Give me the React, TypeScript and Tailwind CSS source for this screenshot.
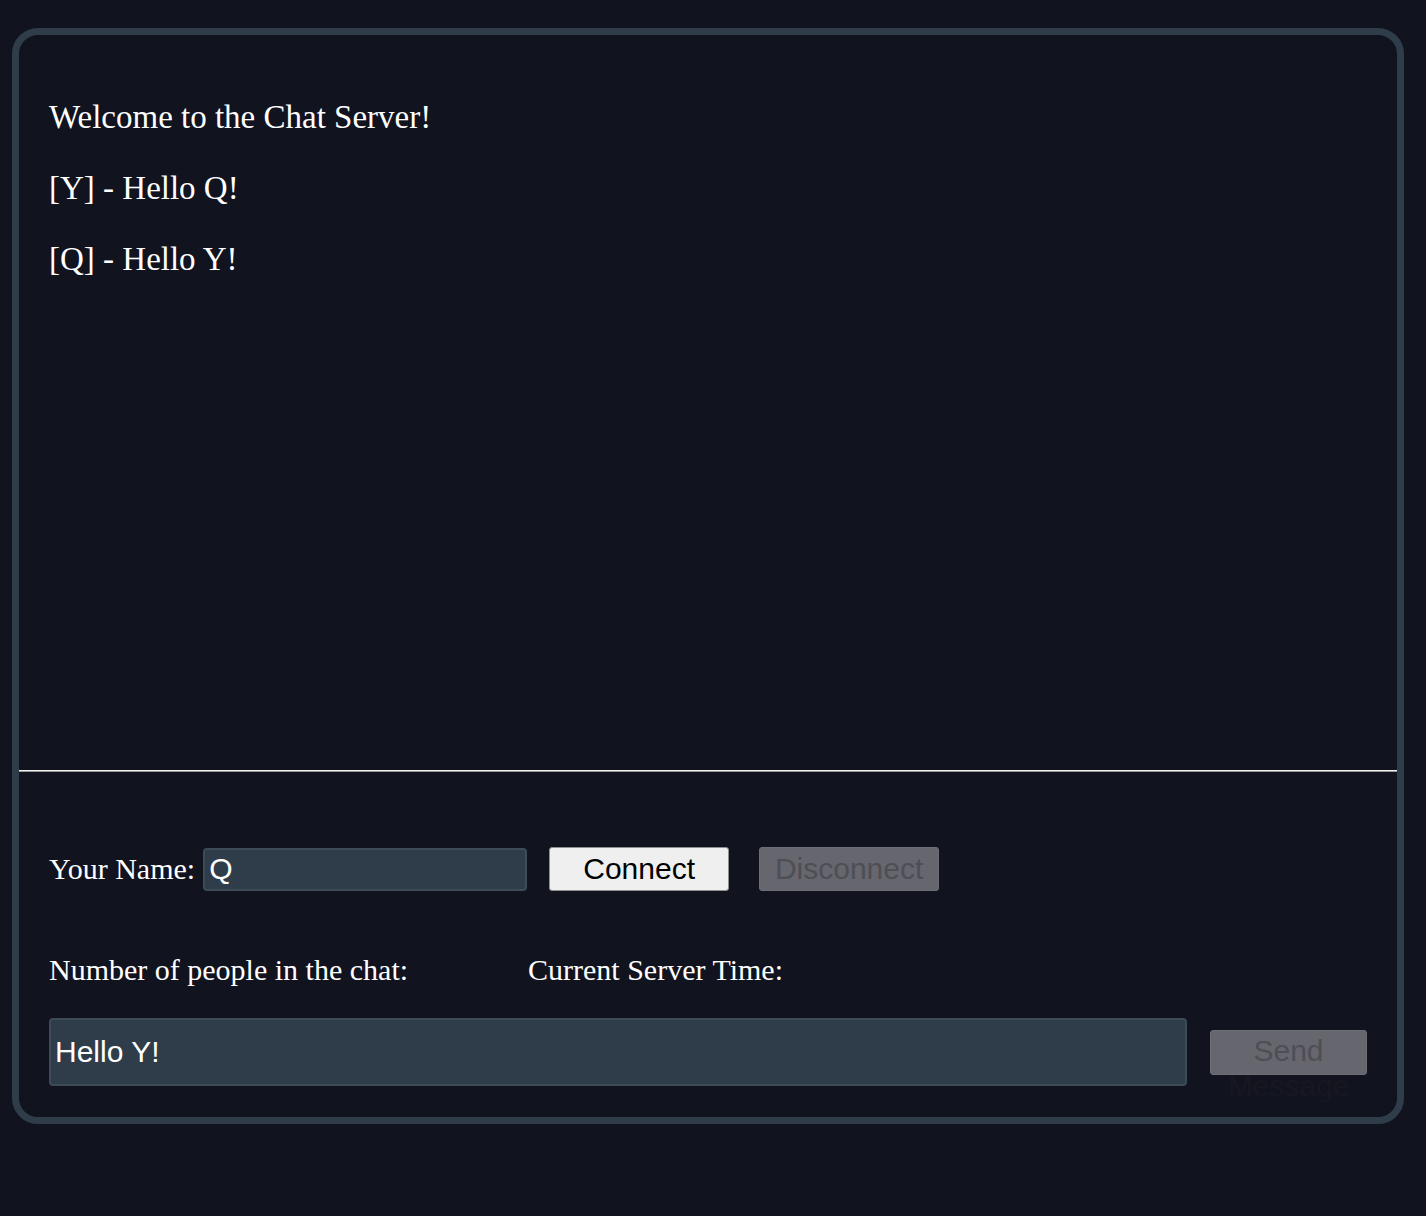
export default function App() {
  return (
    <div className="min-h-[1216px] bg-[#11131f] pt-[28px] pl-[12px] font-['Liberation_Serif',serif] text-white">
      <div className="w-[1392px] h-[1096px] rounded-[26px] border-[7px] border-[#2f3d4a] bg-[#11131f] flex flex-col overflow-hidden">
        {/* Message log */}
        <div className="h-[735px] px-[30px] pt-[63px] flex flex-col gap-[33px] text-[33px] leading-[38px]">
          <p>Welcome to the Chat Server!</p>
          <p>[Y] - Hello Q!</p>
          <p>[Q] - Hello Y!</p>
        </div>

        <div className="h-[2px] border-t border-t-[#f2f2f2] border-b border-b-[#9a9a9a]" />

        {/* Controls */}
        <div className="px-[30px] pt-[75px] pb-[31px] flex flex-col">
          <div className="h-[44px] flex items-center text-[30px] leading-[34px]">
            <span>Your Name:</span>
            <input
              readOnly
              value="Q"
              className="ml-[8px] w-[324px] h-[43px] rounded-[4px] border-2 border-[#3d4a58] bg-[#2f3d4a] px-[4px] font-['Liberation_Sans',sans-serif] text-[30px] text-white outline-none"
            />
            <button className="ml-[22px] w-[180px] h-[44px] rounded-[3px] border border-[#8f8f8f] bg-[#efefef] font-['Liberation_Sans',sans-serif] text-[30px] leading-[34px] text-black">
              Connect
            </button>
            <button
              disabled
              className="ml-[30px] w-[180px] h-[44px] rounded-[3px] border border-[#6e6e76] bg-[#66666e] font-['Liberation_Sans',sans-serif] text-[30px] leading-[34px] text-[#4e4e56]"
            >
              Disconnect
            </button>
          </div>

          <div className="mt-[62px] h-[34px] flex text-[30px] leading-[34px]">
            <span className="w-[479px]">Number of people in the chat:</span>
            <span>Current Server Time:</span>
          </div>

          <div className="mt-[31px] h-[68px] flex items-center">
            <input
              readOnly
              value="Hello Y!"
              className="w-[1138px] h-[68px] rounded-[4px] border-2 border-[#3d4a58] bg-[#2f3d4a] px-[4px] font-['Liberation_Sans',sans-serif] text-[30px] text-white outline-none"
            />
            <div className="ml-[23px] relative w-[157px] h-[45px] rounded-[3px] border border-[#6e6e76] bg-[#66666e]">
              <div className="absolute left-0 right-0 top-[3px] text-center font-['Liberation_Sans',sans-serif] text-[30px] leading-[34px] text-[#4e4e56]">
                Send
              </div>
              <div className="absolute left-0 right-0 top-[38px] text-center font-['Liberation_Sans',sans-serif] text-[30px] leading-[34px] text-[#17181f]">
                Message
              </div>
            </div>
          </div>
        </div>
      </div>
    </div>
  );
}
